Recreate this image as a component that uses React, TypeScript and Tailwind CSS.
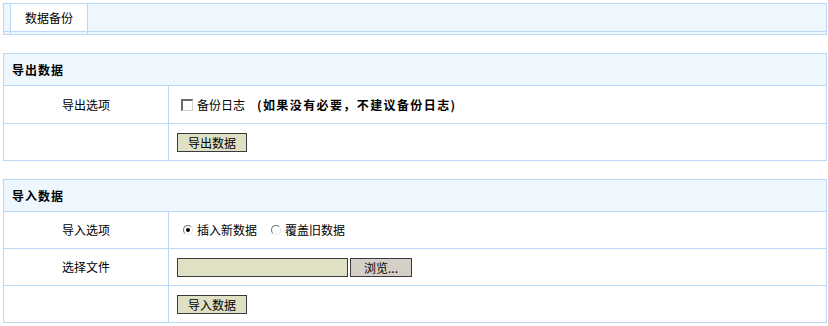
import React from 'react';

const line = 'border-[#b9d9f7]';

const Row = ({ label, h, last, children }: { label?: string; h: string; last?: boolean; children?: React.ReactNode }) => (
    <div className={`flex ${h} ${last ? '' : `border-b ${line}`}`}>
        <div className={`w-[165px] shrink-0 border-r ${line} flex items-center justify-center`}>{label}</div>
        <div className="flex-1 flex items-center pl-[8px]">{children}</div>
    </div>
);

const Button = ({ children, w }: { children: React.ReactNode; w: string }) => (
    <button className={`${w} h-[19px] border border-[#3a3a3a] bg-[#e0e0c5] text-[12px] leading-[17px] text-black`}>
        {children}
    </button>
);

const Radio = ({ checked, children }: { checked?: boolean; children: React.ReactNode }) => (
    <label className="flex items-center">
        <span className="w-[10px] h-[10px] rounded-full border border-t-[#6f6f6f] border-l-[#6f6f6f] border-r-[#e4e4e4] border-b-[#e4e4e4] bg-white flex items-center justify-center">
            {checked && <span className="w-[4px] h-[4px] rounded-full bg-black" />}
        </span>
        <span className="ml-[4px]">{children}</span>
    </label>
);

export default function App() {
    return (
        <div className="w-[828px] h-[326px] bg-white text-black text-[12px] leading-[14px] pt-[3px]" style={{ fontFamily: '"Noto Sans CJK SC", "Liberation Sans", sans-serif' }}>
            {/* tab strip */}
            <div className={`ml-[3px] w-[824px] border ${line} bg-[#eef6fe]`}>
                <div className="flex h-[27px]">
                    <div className="w-[6px]" />
                    <div className={`w-[78px] border-x ${line} bg-white flex items-center justify-center`}>数据备份</div>
                    <div className="flex-1" />
                </div>
                <div className={`flex h-[3px] border-t ${line}`}>
                    <div className="w-[6px]" />
                    <div className={`w-[78px] border-x ${line}`} />
                    <div className="flex-1" />
                </div>
            </div>

            {/* export */}
            <div className={`ml-[3px] mt-[18px] w-[824px] border ${line}`}>
                <div className={`h-[32px] border-b ${line} bg-[#eef6fe] flex items-center pl-[8px] font-bold tracking-[1px]`}>导出数据</div>
                <Row label="导出选项" h="h-[38px]">
                    <span className="w-[12px] h-[12px] ml-[4px] border-t-2 border-l-2 border-r border-b border-t-[#6a6a6a] border-l-[#6a6a6a] border-r-[#d4d0c8] border-b-[#d4d0c8] bg-white" />
                    <span className="ml-[4px]">备份日志</span>
                    <span className="ml-[12px] font-bold tracking-[1.4px]">(如果没有必要，不建议备份日志)</span>
                </Row>
                <Row h="h-[36px]" last>
                    <Button w="w-[70px]">导出数据</Button>
                </Row>
            </div>

            {/* import */}
            <div className={`ml-[3px] mt-[18px] w-[824px] border ${line}`}>
                <div className={`h-[32px] border-b ${line} bg-[#eef6fe] flex items-center pl-[8px] font-bold tracking-[1px]`}>导入数据</div>
                <Row label="导入选项" h="h-[37px]">
                    <div className="flex items-center gap-[14px] ml-[6px]">
                        <Radio checked>插入新数据</Radio>
                        <Radio>覆盖旧数据</Radio>
                    </div>
                </Row>
                <Row label="选择文件" h="h-[37px]">
                    <span className="w-[171px] h-[19px] border border-[#3a3a3a] bg-[#e0e0c5]" />
                    <button className="ml-[2px] w-[62px] h-[19px] border border-[#3a3a3a] bg-[#d4d0c8] text-[12px] leading-[17px]">浏览...</button>
                </Row>
                <Row h="h-[36px]" last>
                    <Button w="w-[70px]">导入数据</Button>
                </Row>
            </div>
        </div>
    );
}
